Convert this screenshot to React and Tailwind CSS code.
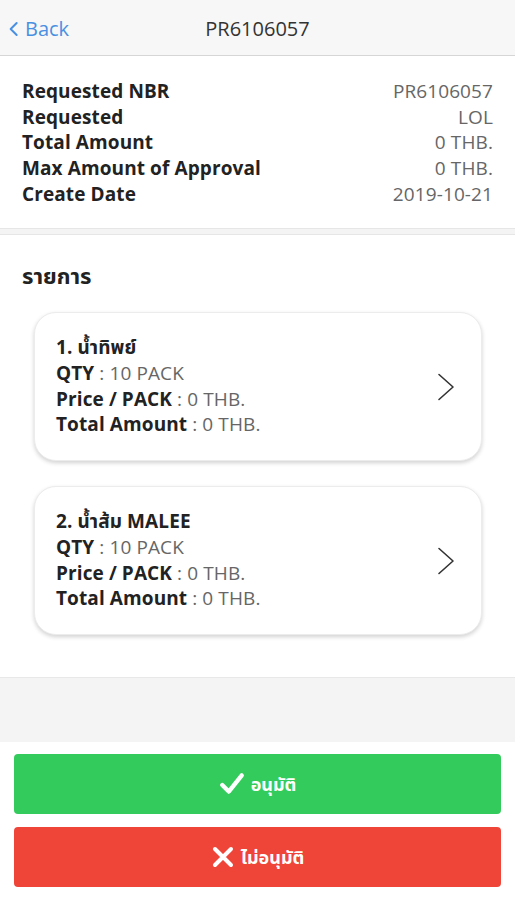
import React from 'react';

const info = [
  ['Requested NBR', 'PR6106057'],
  ['Requested', 'LOL'],
  ['Total Amount', '0 THB.'],
  ['Max Amount of Approval', '0 THB.'],
  ['Create Date', '2019-10-21'],
];

const items = [
  { name: '1. น้ำทิพย์', qty: '10 PACK', price: '0 THB.', total: '0 THB.' },
  { name: '2. น้ำส้ม MALEE', qty: '10 PACK', price: '0 THB.', total: '0 THB.' },
];

const Chevron = ({ className, d, box = '0 0 24 24' }) => (
  <svg viewBox={box} fill="none" stroke="currentColor" strokeLinecap="round" strokeLinejoin="round" className={className}>
    <path d={d} />
  </svg>
);

const ItemCard = ({ item }) => (
  <div className="flex items-center rounded-[22px] bg-white pl-[21px] pr-[26px] py-[22px] shadow-[0_2px_4px_rgba(0,0,0,0.18)] border border-[#ececec]">
    <div className="flex-1 text-[19px] leading-[25.7px] text-[#222] tracking-[0.1px]">
      <div className="font-bold">{item.name}</div>
      <div>
        <span className="font-bold">QTY</span>
        <span className="text-[#666]"> : {item.qty}</span>
      </div>
      <div>
        <span className="font-bold">Price / PACK</span>
        <span className="text-[#666]"> : {item.price}</span>
      </div>
      <div>
        <span className="font-bold">Total Amount</span>
        <span className="text-[#666]"> : {item.total}</span>
      </div>
    </div>
    <Chevron className="w-[18px] h-[28px] text-[#333] stroke-[1.6]" box="0 0 18 28" d="M2 1.5 L16 14 L2 26.5" />
  </div>
);

export default function App() {
  return (
    <div
      className="w-[515px] h-[900px] bg-white flex flex-col overflow-hidden"
      style={{ fontFamily: '"Open Sans", "Noto Sans", "Noto Sans Thai", "Liberation Sans", sans-serif' }}
    >
      {/* Nav bar */}
      <div className="h-[56px] shrink-0 bg-[#f7f7f7] border-b border-[#d6d6d6] flex items-center relative">
        <div className="flex items-center pl-[6px] text-[#4a90e2] text-[20px] pt-[3px]">
          <Chevron className="w-[16px] h-[22px] stroke-[3]" d="M16 3 L7 12 L16 21" />
          <span className="ml-[3px]">Back</span>
        </div>
        <div className="absolute left-0 right-0 text-center text-[20px] font-medium text-[#333] pointer-events-none pt-[3px]">
          PR6106057
        </div>
      </div>

      {/* Header info */}
      <div className="px-[22px] pt-[23px] pb-[20px] text-[19px] leading-[25.7px] tracking-[0.1px]">
        {info.map(([k, v]) => (
          <div key={k} className="flex justify-between">
            <span className="font-bold text-[#222]">{k}</span>
            <span className="text-[#666]">{v}</span>
          </div>
        ))}
      </div>

      <div className="h-[13px] bg-[#f4f4f4] border-y border-[#e6e6e6]" />

      {/* Items */}
      <div className="pt-[27px] pb-[42px]">
        <div className="px-[22px] text-[22px] font-bold text-[#222] leading-[26px]">รายการ</div>
        <div className="flex flex-col gap-[25px] mt-[24px] pl-[34px] pr-[33px]">
          {items.map((it) => (
            <ItemCard key={it.name} item={it} />
          ))}
        </div>
      </div>

      <div className="h-[65px] shrink-0 bg-[#f4f4f4] border-t border-[#e8e8e8]" />

      {/* Actions */}
      <div className="flex flex-col gap-[13px] px-[14px] pt-[12px] pb-[13px]">
        <button className="h-[60px] rounded-[4px] bg-[#33cc5c] text-white flex items-center justify-center gap-[6px] text-[18px] font-bold">
          <Chevron className="w-[26px] h-[26px] stroke-[4]" d="M3 13 L9 19 L21 4" />
          <span>อนุมัติ</span>
        </button>
        <button className="h-[60px] rounded-[4px] bg-[#ef4538] text-white flex items-center justify-center gap-[6px] text-[18px] font-bold">
          <Chevron className="w-[24px] h-[24px] stroke-[4]" d="M4 4 L20 20 M20 4 L4 20" />
          <span>ไม่อนุมัติ</span>
        </button>
      </div>
    </div>
  );
}
